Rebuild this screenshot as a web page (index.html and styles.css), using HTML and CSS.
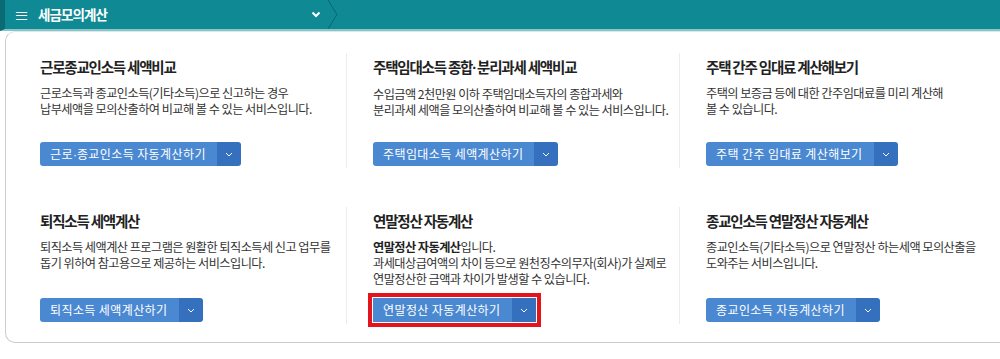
FILE: index.html
```html
<!DOCTYPE html>
<html>
<head>
	<title>세금모의계산</title>
	<link rel="stylesheet" href="styles.css">
</head>
<body>
	<header class="topbar">
		<div class="menu">
			<span class="burger">&#8801;</span>
			<h1 class="menu-title">세금모의계산</h1>
			<svg class="menu-arrow" width="10" height="7" viewBox="0 0 10 7"><path d="M1.5 1.5 L5 5 L8.5 1.5" fill="none" stroke="#fff" stroke-width="2"/></svg>
		</div>
		<svg class="crumb" width="14" height="29" viewBox="0 0 14 29"><path d="M1 0 L10 14.5 L1 29" fill="none" stroke="#0a6670" stroke-width="1"/></svg>
	</header>

	<main class="box">
		<div class="grid">
			<section class="item">
				<h2>근로종교인소득 세액비교</h2>
				<p>근로소득과 종교인소득(기타소득)으로 신고하는 경우<br>납부세액을 모의산출하여 비교해 볼 수 있는 서비스입니다.</p>
				<div class="btn"><span class="btn-main">근로<span class="dot">·</span>종교인소득 자동계산하기</span><span class="btn-dd"><svg width="8" height="5" viewBox="0 0 8 5"><path d="M1 1 L4 4 L7 1" fill="none" stroke="#fff" stroke-width="1"/></svg></span></div>
			</section>
			<section class="item">
				<h2>주택임대소득 종합<span class="dot">·</span>분리과세 세액비교</h2>
				<p>수입금액 2천만원 이하 주택임대소득자의 종합과세와<br>분리과세 세액을 모의산출하여 비교해 볼 수 있는 서비스입니다.</p>
				<div class="btn"><span class="btn-main">주택임대소득 세액계산하기</span><span class="btn-dd"><svg width="8" height="5" viewBox="0 0 8 5"><path d="M1 1 L4 4 L7 1" fill="none" stroke="#fff" stroke-width="1"/></svg></span></div>
			</section>
			<section class="item">
				<h2>주택 간주 임대료 계산해보기</h2>
				<p>주택의 보증금 등에 대한 간주임대료를 미리 계산해<br>볼 수 있습니다.</p>
				<div class="btn"><span class="btn-main">주택 간주 임대료 계산해보기</span><span class="btn-dd"><svg width="8" height="5" viewBox="0 0 8 5"><path d="M1 1 L4 4 L7 1" fill="none" stroke="#fff" stroke-width="1"/></svg></span></div>
			</section>
			<section class="item">
				<h2>퇴직소득 세액계산</h2>
				<p>퇴직소득 세액계산 프로그램은 원활한 퇴직소득세 신고 업무를<br>돕기 위하여 참고용으로 제공하는 서비스입니다.</p>
				<div class="btn"><span class="btn-main">퇴직소득 세액계산하기</span><span class="btn-dd"><svg width="8" height="5" viewBox="0 0 8 5"><path d="M1 1 L4 4 L7 1" fill="none" stroke="#fff" stroke-width="1"/></svg></span></div>
			</section>
			<section class="item">
				<h2>연말정산 자동계산</h2>
				<p><b>연말정산 자동계산</b>입니다.<br>과세대상급여액의 차이 등으로 원천징수의무자(회사)가 실제로<br>연말정산한 금액과 차이가 발생할 수 있습니다.</p>
				<div class="btn marked"><span class="btn-main">연말정산 자동계산하기</span><span class="btn-dd"><svg width="8" height="5" viewBox="0 0 8 5"><path d="M1 1 L4 4 L7 1" fill="none" stroke="#fff" stroke-width="1"/></svg></span></div>
			</section>
			<section class="item">
				<h2>종교인소득 연말정산 자동계산</h2>
				<p>종교인소득(기타소득)으로 연말정산 하는세액 모의산출을<br>도와주는 서비스입니다.</p>
				<div class="btn"><span class="btn-main">종교인소득 자동계산하기</span><span class="btn-dd"><svg width="8" height="5" viewBox="0 0 8 5"><path d="M1 1 L4 4 L7 1" fill="none" stroke="#fff" stroke-width="1"/></svg></span></div>
			</section>
		</div>
	</main>
</body>
</html>
```

FILE: styles.css
```css
*{
	margin: 0px;
	padding: 0px;
	box-sizing: border-box;
}
body{
	width: 1000px;
	overflow: hidden;
	background: #fff;
	font-family: "Noto Sans CJK KR", "Noto Sans", sans-serif;
	color: #333;
}
.topbar{
	height: 31px;
	background: #0f8a95;
	border-left: 5px solid #0a6b74;
	border-bottom: 2px solid #86c7cb;
	display: flex;
	align-items: center;
}
.menu{
	width: 316px;
	display: flex;
	align-items: center;
	color: #fff;
}
.burger{
	width: 33px;
	padding-left: 9px;
	font-size: 15px;
	line-height: 29px;
}
.menu-title{
	flex: 1;
	font-size: 13.5px;
	font-weight: bold;
	line-height: 29px;
	letter-spacing: -0.9px;
}
.crumb{
	display: block;
	margin-left: 6px;
}
.box{
	width: 1020px;
	margin-left: 5px;
	height: 312px;
	border: 1px solid #ccc;
	border-top-color: #e4e4e4;
	border-radius: 10px 0 0 10px;
	padding: 21px 0 0 7px;
}
.grid{
	display: grid;
	grid-template-columns: 333px 333px 333px;
	row-gap: 39px;
}
.item{
	height: 115px;
	padding: 4px 0 2px 26px;
	border-left: 1px solid #ececec;
	display: flex;
	flex-direction: column;
	align-items: flex-start;
}
.item:nth-child(1), .item:nth-child(4){
	border-left-color: transparent;
}
.item:nth-child(n+4){
	height: 117px;
}
.item h2{
	font-size: 14.5px;
	font-weight: bold;
	color: #222;
	letter-spacing: -1.2px;
	line-height: 20px;
	margin-bottom: 8px;
}
.dot{
	font-family: "Liberation Sans", sans-serif;
	letter-spacing: 0;
}
.item p{
	font-size: 12.2px;
	line-height: 16px;
	color: #333;
	letter-spacing: -0.55px;
	white-space: nowrap;
}
.item p b{
	color: #222;
}
.btn{
	margin-top: auto;
	display: flex;
	height: 24px;
	border-radius: 3px;
	overflow: hidden;
	color: #fff;
	font-size: 12px;
	line-height: 24px;
}
.btn-main{
	background: #4b88d2;
	padding: 0 11px 0 10px;
	letter-spacing: 0.4px;
}
.btn-dd{
	width: 24px;
	background: #3470bd;
	display: flex;
	align-items: center;
	justify-content: center;
}
.marked{
	outline: 4px solid #e3141c;
	outline-offset: 1px;
	overflow: visible;
	border-radius: 0;
}
```
